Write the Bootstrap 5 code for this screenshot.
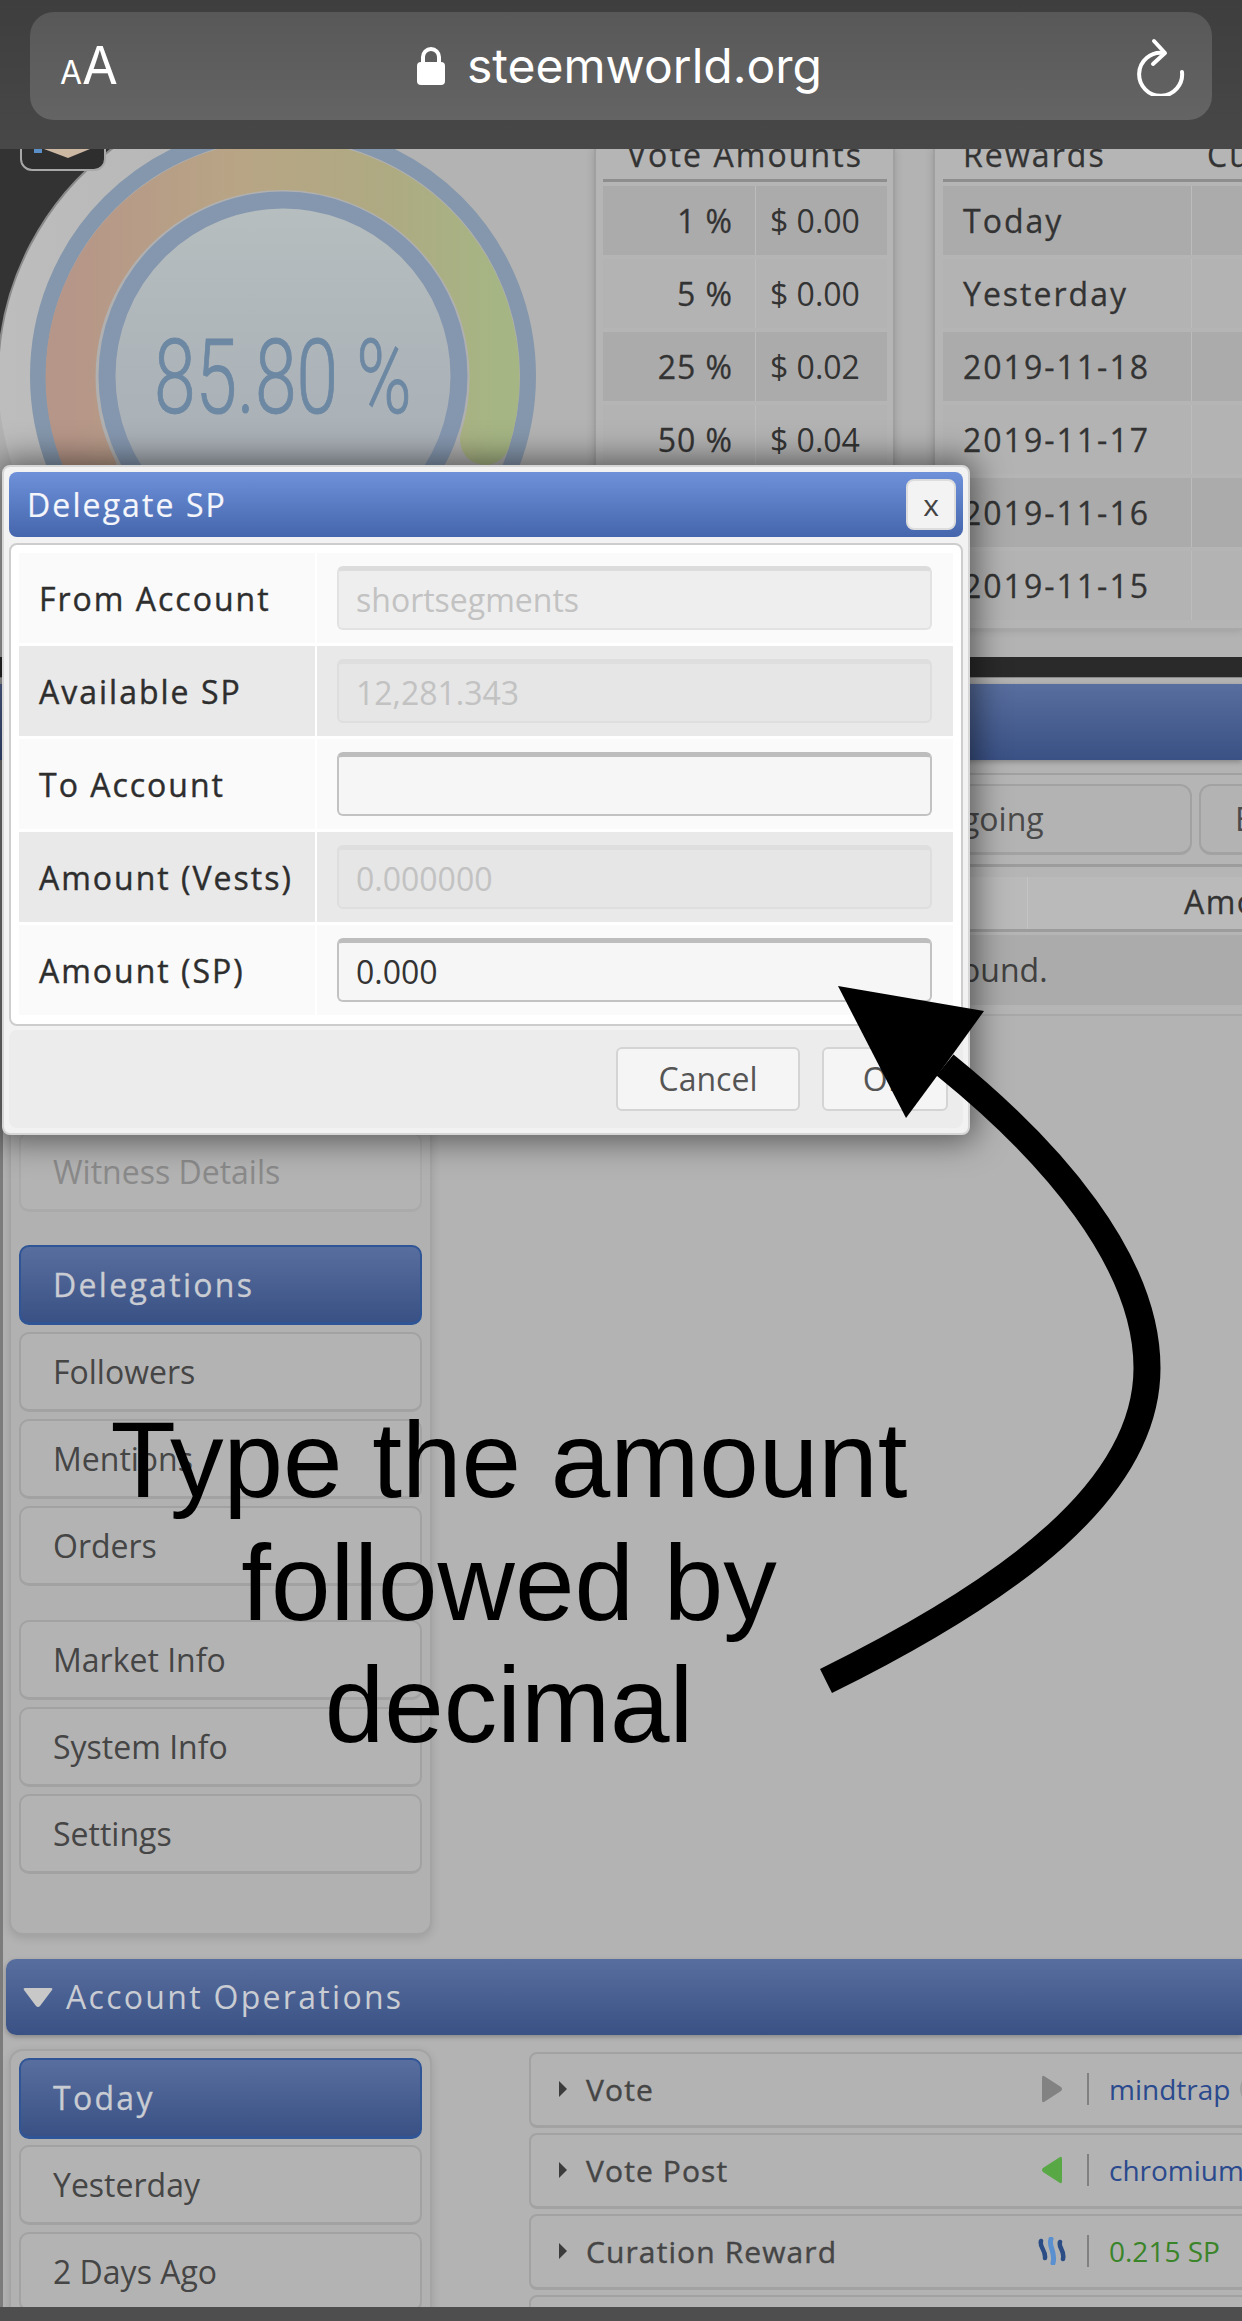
<!DOCTYPE html>
<html lang="en">
<head>
  <meta charset="UTF-8" />
  <title>Delegate SP</title>
  <link rel="stylesheet" href="https://cdn.jsdelivr.net/npm/bootstrap@5.3.0/dist/css/bootstrap.min.css" />
  <style>
    html, body { height: 100%; overflow: hidden; }
    body {
      width: 1242px; height: 2321px; position: relative;
      background: #b3b3b3; color: #3a3a3a;
      font-family: "Open Sans", "Liberation Sans", sans-serif; font-size: 32px;
    }
    /* safari bar */
    .ios-bar { height: 149px; position: relative; z-index: 5; background: linear-gradient(#3e3e3e, #484848); padding: 12px 30px 29px; }
    .ios-pill { height: 108px; border-radius: 24px; background: linear-gradient(#585858, #646464); color: #fff; font-family: Inter, "Liberation Sans", sans-serif; padding: 0 26px 0 30px; }
    .ios-aa { width: 193px; line-height: 1; white-space: nowrap; }
    .ios-aa .a-sm { font-size: 32px; }
    .ios-aa .a-lg { font-size: 52px; }
    .ios-url-wrap { margin-left: 19px; margin-right: 169px; gap: 22px; }
    .ios-url { font-size: 48px; letter-spacing: 0; }

    .main-area { height: 2158px; overflow: hidden; }
    /* top stats */
    .top-sec { height: 507px; background: #b3b3b3; }
    .gauge-pane { flex: 0 0 594px; height: 507px; }
    .gauge-pane svg { display: block; }
    .gauge-num { font-family: Roboto, "Liberation Sans", sans-serif; font-weight: 300; font-size: 104px; fill: #6d88a3; stroke: #6d88a3; stroke-width: 1; }
    .vote-pane { flex: 0 0 301px; height: 481px; background: #b5b5b5; border-left: 2px solid #a0a0a0; border-right: 2px solid #a0a0a0; border-bottom: 2px solid #a8a8a8; padding: 0 6px 0 7px; box-shadow: 0 0 8px rgba(0,0,0,.15); }
    .rew-pane { flex: 0 0 309px; margin-left: 38px; height: 481px; background: #b5b5b5; border-left: 2px solid #a0a0a0; border-bottom: 2px solid #a8a8a8; padding-left: 8px; box-shadow: 0 0 8px rgba(0,0,0,.15); overflow: hidden; }
    .stat-tbl { border-collapse: separate; border-spacing: 0 4px; table-layout: fixed; margin-top: -4px; color: #333; }
    .rew-tbl { width: 348px; max-width: none; }
    .stat-tbl th { height: 33px; line-height: 12px; font-weight: 400; letter-spacing: 2.1px; -webkit-text-stroke: .3px #333; text-align: left; vertical-align: top; padding-top: 0; border-bottom: 3px solid #8e8e8e; white-space: nowrap; }
    .stat-tbl td { height: 69px; padding: 0; vertical-align: middle; border-left: 1px solid #bcbcbc; white-space: nowrap; }
    .stat-tbl td:first-child { border-left: 0; }
    .stat-tbl tr:nth-child(odd) td { background: #ababab; }
    .stat-tbl tr:nth-child(even) td { background: #b3b3b3; }
    .pct-cell { text-align: right; padding-right: 22px !important; letter-spacing: 1px; -webkit-text-stroke: .3px #333; }
    .usd-cell { padding-left: 14px !important; }
    .day-cell { padding-left: 20px !important; }
    .rew-tbl td.day-cell { letter-spacing: 2px; -webkit-text-stroke: .3px #333; }

    /* section strips */
    .dark-strip { height: 21px; background: #2a2a2a; border-bottom: 1px solid #888; margin-top: 1px; }
    .blue-strip { height: 76px; margin-top: 6px; background: linear-gradient(#586e9e, #3a5185); box-shadow: 0 2px 5px rgba(0,0,0,.25); }
    .lower-wrap { border-left: 3px solid #7c7c7c; }
    .side-pane { flex: 0 0 423px; margin-left: 6px; border: 2px solid #a4a4a4; border-radius: 14px; background: #b1b1b1; padding: 0 8px; box-shadow: 0 3px 10px rgba(0,0,0,.12); }
    .side-btn {
      display: block; width: 100%; height: 80px; margin-bottom: 7px; padding: 0 0 0 32px;
      text-align: left; font-size: 32px; line-height: 76px; color: #454545; background: #b3b3b3;
      border: 2px solid #a2a2a2; border-bottom-width: 3px; border-radius: 10px;
    }
    .side-btn.is-off { color: #8a8a8a; border-color: #aaa; }
    .side-btn.is-on { color: #c9ccd2; letter-spacing: 2.3px; -webkit-text-stroke: .3px #c9ccd2; background: linear-gradient(#586e9e, #3a5185); border-color: #2f5596; }
    .side-gap-low { height: 26.5px; }

    /* delegations pane on the right */
    .deleg-pane { margin: 13px 0 0 8px; flex: 1 1 0; min-width: 0; height: 243px; background: #b5b5b5; border-top: 2px solid #a0a0a0; border-bottom: 2px solid #a8a8a8; overflow: hidden; }
    .tab-line { padding: 9px 0 0 430px; height: 92px; border-bottom: 3px solid #9c9c9c; gap: 7px; width: 1000px; }
    .tab-btn { flex: 0 0 auto; height: 71px; line-height: 66px; padding-left: 34px; color: #4a4a4a; background: #b3b3b3; border: 2px solid #a2a2a2; border-bottom-width: 3px; border-radius: 12px; }
    .tab-one { width: 322px; }
    .tab-two { width: 300px; }
    .head-line { margin-top: 10px; height: 55px; background: #bababa; border-bottom: 3px solid #9c9c9c; }
    .head-a { flex: 0 0 588px; border-right: 1px solid #c4c4c4; }
    .head-b { padding-left: 156px; line-height: 50px; color: #333; letter-spacing: 1.5px; -webkit-text-stroke: .3px #333; white-space: nowrap; }
    .none-line { margin-top: 3px; height: 70px; line-height: 70px; background: #ababab; padding-left: 278px; color: #404040; white-space: nowrap; }

    /* account operations */
    .ops-bar { margin: 24px 0 0 3px; height: 76px; border-radius: 10px 0 0 10px; background: linear-gradient(#586e9e, #3a5185); color: #c9ccd2; letter-spacing: 2.3px; line-height: 72px; box-shadow: 0 2px 5px rgba(0,0,0,.25); padding-left: 16px; gap: 12px; }
    .ops-col { margin: 3px 0 0 97px; flex: 0 0 720px; }
    .op-row { height: 76px; margin-bottom: 5px; background: #b3b3b3; border: 2px solid #a2a2a2; border-bottom-width: 3px; border-radius: 8px 0 0 8px; padding-left: 28px; white-space: nowrap; }
    .op-tri { flex: 0 0 8px; width: 0; height: 0; border-left: 8px solid #3c3c3c; border-top: 8px solid transparent; border-bottom: 8px solid transparent; margin-right: 19px; }
    .op-name { flex: 0 0 452px; font-size: 30px; letter-spacing: 1.1px; -webkit-text-stroke: .4px #454545; color: #454545; }
    .op-ico { flex: 0 0 28px; display: flex; justify-content: center; }
    .op-sep { flex: 0 0 2px; height: 32px; margin: 0 20px 0 21px; background: #808080; }
    .op-val { font-size: 28px; }
    .val-user { color: #2b4a8e; }
    .val-sp { color: #3a8429; }
    .op-dot { flex: 0 0 34px; height: 34px; margin-left: 10px; border-radius: 50%; background: #a0a0a0; }

    .ios-foot { height: 14px; background: #4e4e4e; }

    /* dialog, over the page */
    .dlg-box { position: absolute; left: 2px; top: 465px; width: 968px; height: 670px; z-index: 3; background: #f2f2f2; border: 2px solid #d6d6d6; border-radius: 8px; box-shadow: 0 0 32px 6px rgba(0,0,0,.5); padding: 5px; }
    .dlg-head { height: 65px; padding: 0 7px 0 18px; background: linear-gradient(#6e91da, #4566ac); border: 0; border-radius: 8px; color: #f4f6fb; letter-spacing: 2.1px; -webkit-text-stroke: .2px #f4f6fb; }
    .dlg-x { width: 50px; height: 51px; padding: 0; font-size: 30px; line-height: 1; background: #f3f3f3; border: 2px solid #ddd; border-radius: 8px; color: #444; letter-spacing: 0; -webkit-text-stroke: 0; }
    .dlg-body { margin-top: 6px; height: 483px; padding: 8px; background: #fff; border: 2px solid #cdcdcd; border-radius: 8px; }
    .dlg-row { height: 90px; margin-bottom: 3px; }
    .dlg-row label { flex: 0 0 296px; height: 100%; line-height: 91px; padding-left: 20px; margin-right: 2px; background: #fafafa; color: #2e2e2e; letter-spacing: 2px; -webkit-text-stroke: .4px #2e2e2e; white-space: nowrap; }
    .dlg-val { flex: 1 1 0; height: 100%; background: #fafafa; }
    .dlg-row:nth-child(even) label, .dlg-row:nth-child(even) .dlg-val { background: #e9e9e9; }
    .dlg-input.form-control { width: 595px; height: 64px; margin-left: 20px; padding: 0 17px; font-size: 32px; color: #333; background: #f6f6f6; border: 2px solid #c2c2c2; border-top: 5px solid #bdbdbd; border-radius: 6px; box-shadow: none; }
    .dlg-input.form-control:disabled { color: #c2c2c2; background: #eeeeee; border-color: #e2e2e2; border-top-color: #dcdcdc; opacity: 1; }
    .dlg-row:nth-child(even) .dlg-input.form-control:disabled { background: #e6e6e6; border-color: #dedede; }
    .dlg-foot { margin-top: 4px; height: 98px; padding: 0 15px 17px 0; background: #ececec; border: 0; border-radius: 8px; gap: 22px; }
    .dlg-btn { height: 64px; font-size: 32px; line-height: 1; color: #555; background: #f5f5f5; border: 2px solid #d4d4d4; border-radius: 6px; padding: 0; }
    .btn-cancel { width: 184px; }
    .btn-ok { width: 126px; }

    /* hand-drawn note on top of the shot */
    .note-arrow { position: absolute; left: 0; top: 0; z-index: 4; pointer-events: none; }
    .note-text { position: absolute; left: 109px; top: 1399px; width: 800px; z-index: 4; text-align: center; color: #000; font-family: "Liberation Sans", Arial, sans-serif; font-size: 107px; line-height: 122.5px; }
  </style>
</head>
<body class="d-flex flex-column">

  <div class="ios-bar">
    <div class="ios-pill d-flex align-items-center">
      <div class="ios-aa"><span class="a-sm">A</span><span class="a-lg">A</span></div>
      <div class="ios-url-wrap flex-grow-1 d-flex justify-content-center align-items-center">
        <svg width="28" height="38" viewBox="0 0 28 38"><path d="M6 17V10a8 8 0 0 1 16 0v7" fill="none" stroke="#fff" stroke-width="4"/><rect x="0" y="15" width="28" height="23" rx="4" fill="#fff"/></svg>
        <span class="ios-url">steemworld.org</span>
      </div>
      <svg width="50" height="60" viewBox="0 0 50 60"><path d="M46 36A21.5 21.5 0 1 1 27 17" fill="none" stroke="#fff" stroke-width="4" stroke-linecap="round"/><path d="M18 5L29 17L17 28" fill="none" stroke="#fff" stroke-width="4" stroke-linecap="round" stroke-linejoin="round"/></svg>
    </div>
  </div>

  <div class="main-area">
    <div class="top-sec d-flex">
      <div class="gauge-pane">
        <svg width="594" height="507" viewBox="0 149 594 507">
          <defs>
            <linearGradient id="bandGrad" x1="0" y1="0" x2="1" y2="0">
              <stop offset="0" stop-color="#b69688"/>
              <stop offset=".4" stop-color="#b8a585"/>
              <stop offset=".75" stop-color="#aeaa82"/>
              <stop offset="1" stop-color="#a6b584"/>
            </linearGradient>
            <linearGradient id="discGrad" x1="0" y1="0" x2="0" y2="1">
              <stop offset="0" stop-color="#b7bebf"/>
              <stop offset="1" stop-color="#a3aab3"/>
            </linearGradient>
            <linearGradient id="plateGrad" x1="0" y1="0" x2="1" y2="0">
              <stop offset="0" stop-color="#bdbdbd"/>
              <stop offset=".6" stop-color="#b3b3b3"/>
            </linearGradient>
          </defs>
          <path d="M0 149H120A285 285 0 0 0 0 350Z" fill="#333"/>
          <circle cx="283" cy="376" r="285" fill="url(#plateGrad)"/>
          <path d="M120 143A285 285 0 0 0 -2 376" fill="none" stroke="#8a8a8a" stroke-width="2"/>
          <rect x="21" y="120" width="84" height="50" rx="11" fill="#2e2e2e" stroke="#a8a8a8" stroke-width="2"/>
          <path d="M44 149H90L68 158Z" fill="#cdb8a4"/>
          <rect x="34" y="149" width="8" height="4" fill="#5b8fc7"/>
          <circle cx="283" cy="376" r="245" fill="#b0b0b0" stroke="#8597ac" stroke-width="16"/>
          <path d="M92 470A212 212 0 1 1 485 440" fill="none" stroke="url(#bandGrad)" stroke-width="50" stroke-linecap="round"/>
          <circle cx="283" cy="376" r="176" fill="url(#discGrad)" stroke="#8597af" stroke-width="17"/>
          <text class="gauge-num" transform="translate(154 413) scale(.72 1)">85.80 %</text>
        </svg>
      </div>
      <div class="vote-pane">
        <table class="stat-tbl">
          <colgroup><col width="152"><col width="132"></colgroup>
          <thead><tr><th colspan="2" class="text-center">Vote Amounts</th></tr></thead>
          <tbody>
            <tr><td class="pct-cell">1 %</td><td class="usd-cell">$ 0.00</td></tr>
            <tr><td class="pct-cell">5 %</td><td class="usd-cell">$ 0.00</td></tr>
            <tr><td class="pct-cell">25 %</td><td class="usd-cell">$ 0.02</td></tr>
            <tr><td class="pct-cell">50 %</td><td class="usd-cell">$ 0.04</td></tr>
          </tbody>
        </table>
      </div>
      <div class="rew-pane">
        <table class="stat-tbl rew-tbl">
          <colgroup><col width="248"><col width="100"></colgroup>
          <thead><tr><th class="day-cell">Rewards</th><th style="padding-left:16px">Curation</th></tr></thead>
          <tbody>
            <tr><td class="day-cell">Today</td><td></td></tr>
            <tr><td class="day-cell">Yesterday</td><td></td></tr>
            <tr><td class="day-cell">2019-11-18</td><td></td></tr>
            <tr><td class="day-cell">2019-11-17</td><td></td></tr>
            <tr><td class="day-cell">2019-11-16</td><td></td></tr>
            <tr><td class="day-cell">2019-11-15</td><td></td></tr>
          </tbody>
        </table>
      </div>
    </div>

    <div class="dark-strip"></div>
    <div class="blue-strip"></div>

    <div class="lower-wrap">
      <div class="d-flex align-items-start">
        <div class="side-pane" style="padding-top:355.5px;padding-bottom:52px;margin-top:14px">
          <button class="side-btn is-off" type="button">Witness Details</button>
          <div class="side-gap-low"></div>
          <button class="side-btn is-on" type="button">Delegations</button>
          <button class="side-btn" type="button">Followers</button>
          <button class="side-btn" type="button">Mentions</button>
          <button class="side-btn" type="button">Orders</button>
          <div class="side-gap-low"></div>
          <button class="side-btn" type="button">Market Info</button>
          <button class="side-btn" type="button">System Info</button>
          <button class="side-btn" type="button">Settings</button>
        </div>
        <div class="deleg-pane">
          <div class="tab-line d-flex">
            <div class="tab-btn tab-one">Outgoing</div>
            <div class="tab-btn tab-two">Expiring</div>
          </div>
          <div class="head-line d-flex">
            <div class="head-a"></div>
            <div class="head-b">Amount</div>
          </div>
          <div class="none-line">No delegations found.</div>
        </div>
      </div>

      <div class="ops-bar d-flex align-items-center">
        <svg width="32" height="22" viewBox="0 0 32 22"><path d="M3 2H29Q31 2 30 4L18 20Q16 22 14 20L2 4Q1 2 3 2Z" fill="#c8c8c8"/></svg>
        <span>Account Operations</span>
      </div>

      <div class="d-flex align-items-start" style="margin-top:14px">
        <div class="side-pane" style="padding-top:7px;padding-bottom:20px;height:300px">
          <button class="side-btn is-on" type="button" style="height:81px;margin-bottom:6px">Today</button>
          <button class="side-btn" type="button">Yesterday</button>
          <button class="side-btn" type="button">2 Days Ago</button>
        </div>
        <div class="ops-col">
          <div class="op-row d-flex align-items-center">
            <span class="op-tri"></span><span class="op-name">Vote</span>
            <span class="op-ico"><svg width="22" height="28" viewBox="0 0 22 28"><path d="M3 1L20 12Q22 14 20 16L3 27Q1 28 1 25V3Q1 0 3 1Z" fill="#828282"/></svg></span>
            <span class="op-sep"></span><span class="op-val val-user">mindtrap</span><span class="op-dot"></span>
          </div>
          <div class="op-row d-flex align-items-center">
            <span class="op-tri"></span><span class="op-name">Vote Post</span>
            <span class="op-ico"><svg width="22" height="28" viewBox="0 0 22 28"><path d="M19 1L2 12Q0 14 2 16L19 27Q21 28 21 25V3Q21 0 19 1Z" fill="#58a845"/></svg></span>
            <span class="op-sep"></span><span class="op-val val-user">chromium</span>
          </div>
          <div class="op-row d-flex align-items-center">
            <span class="op-tri"></span><span class="op-name">Curation Reward</span>
            <span class="op-ico"><svg width="28" height="28" viewBox="0 0 28 28"><g fill="none" stroke-linecap="round"><path d="M3 4C1 10 8 13 7 21" stroke="#2c4c86" stroke-width="4.5"/><path d="M13 2C10 9 18 15 15 26" stroke="#5a8fd0" stroke-width="5"/><path d="M22 5C20 11 27 13 25 22" stroke="#2c4c86" stroke-width="4.5"/></g></svg></span>
            <span class="op-sep"></span><span class="op-val val-sp">0.215 SP</span>
          </div>
          <div class="op-row"></div>
        </div>
      </div>
    </div>
  </div>

  <div class="ios-foot"></div>

  <div class="dlg-box">
    <div class="dlg-head d-flex align-items-center justify-content-between">
      <span>Delegate SP</span>
      <button class="dlg-x" type="button">x</button>
    </div>
    <div class="dlg-body">
      <div class="dlg-row d-flex align-items-center"><label>From Account</label><div class="dlg-val d-flex align-items-center"><input class="form-control dlg-input" type="text" value="shortsegments" disabled></div></div>
      <div class="dlg-row d-flex align-items-center"><label>Available SP</label><div class="dlg-val d-flex align-items-center"><input class="form-control dlg-input" type="text" value="12,281.343" disabled></div></div>
      <div class="dlg-row d-flex align-items-center"><label>To Account</label><div class="dlg-val d-flex align-items-center"><input class="form-control dlg-input" type="text" value=""></div></div>
      <div class="dlg-row d-flex align-items-center"><label>Amount (Vests)</label><div class="dlg-val d-flex align-items-center"><input class="form-control dlg-input" type="text" value="0.000000" disabled></div></div>
      <div class="dlg-row d-flex align-items-center"><label>Amount (SP)</label><div class="dlg-val d-flex align-items-center"><input class="form-control dlg-input" type="text" value="0.000"></div></div>
    </div>
    <div class="dlg-foot d-flex align-items-end justify-content-end">
      <button class="btn dlg-btn btn-cancel" type="button">Cancel</button>
      <button class="btn dlg-btn btn-ok" type="button">OK</button>
    </div>
  </div>

  <svg class="note-arrow" width="1242" height="2321" viewBox="0 0 1242 2321">
    <path d="M826 1681C1010 1590 1147 1490 1147 1368C1147 1260 1050 1150 945 1065" fill="none" stroke="#000" stroke-width="27"/>
    <path d="M838 986L984 1011L953 1054L937 1076L906 1118Z" fill="#000"/>
  </svg>
  <div class="note-text">Type the amount<br>followed by<br>decimal</div>

  <script src="https://cdn.jsdelivr.net/npm/bootstrap@5.3.0/dist/js/bootstrap.bundle.min.js"></script>
</body>
</html>
